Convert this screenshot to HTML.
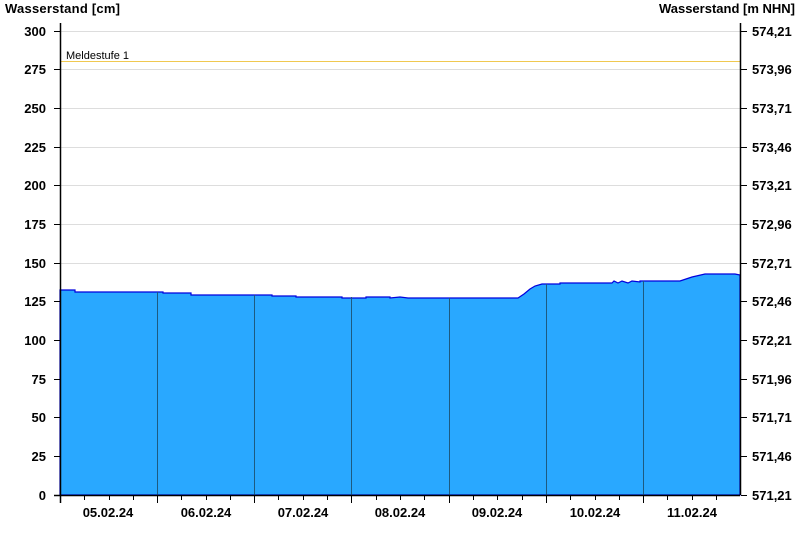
<!DOCTYPE html>
<html><head><meta charset="utf-8"><style>
body{margin:0;background:#fff;}
svg text{font-family:"Liberation Sans",sans-serif;font-size:13px;font-weight:bold;fill:#000;}
</style></head><body>
<svg width="800" height="550" xmlns="http://www.w3.org/2000/svg">
<text x="5" y="13" textLength="115">Wasserstand [cm]</text>
<text x="795" y="13" text-anchor="end">Wasserstand [m NHN]</text>
<g stroke="#ddd" stroke-width="1">
<line x1="60" x2="740" y1="31.5" y2="31.5"/><line x1="60" x2="740" y1="69.5" y2="69.5"/>
<line x1="60" x2="740" y1="108.5" y2="108.5"/><line x1="60" x2="740" y1="147.5" y2="147.5"/>
<line x1="60" x2="740" y1="185.5" y2="185.5"/><line x1="60" x2="740" y1="224.5" y2="224.5"/>
<line x1="60" x2="740" y1="263.5" y2="263.5"/>
</g>
<line x1="60" x2="740" y1="61.5" y2="61.5" stroke="#f0c850" stroke-width="1"/>
<text x="66" y="59" style="font-weight:normal;font-size:11px">Meldestufe 1</text>
<path d="M60,495 L60,290 L75,290 L75,292 L163,292 L163,293 L191,293 L191,295 L272,295 L272,296 L296,296 L296,297 L342,297 L342,298 L366,298 L366,297 L390,297 L390,298 L400,297 L408,298 L518,298 L524,294 L530,289 L535,286 L542,284 L560,284 L560,283 L612,283 L614,281 L618,283 L622,281 L628,283 L632,281 L640,282 L640,281 L680,281 L686,279 L692,277 L705,274 L735,274 L740,275 L740,495 Z" fill="#29a8ff" stroke="#0000dd" stroke-width="1.2"/>
<g stroke="#1d5a80" stroke-width="1">
<line x1="157.5" x2="157.5" y1="292" y2="495"/><line x1="254.5" x2="254.5" y1="295" y2="495"/>
<line x1="351.5" x2="351.5" y1="297" y2="495"/><line x1="449.5" x2="449.5" y1="298" y2="495"/>
<line x1="546.5" x2="546.5" y1="284" y2="495"/><line x1="643.5" x2="643.5" y1="281" y2="495"/>
</g>
<g stroke="#000" stroke-width="1.5">
<line x1="60.5" x2="60.5" y1="23" y2="503"/><line x1="740.5" x2="740.5" y1="23" y2="495"/>
<line x1="54" x2="740" y1="495.5" y2="495.5"/>
</g>
<g stroke="#000" stroke-width="1">
<path d="M54,31.5h6M54,69.5h6M54,108.5h6M54,147.5h6M54,185.5h6M54,224.5h6M54,263.5h6M54,301.5h6M54,340.5h6M54,379.5h6M54,417.5h6M54,456.5h6"/>
<path d="M741,31.5h6M741,69.5h6M741,108.5h6M741,147.5h6M741,185.5h6M741,224.5h6M741,263.5h6M741,301.5h6M741,340.5h6M741,379.5h6M741,417.5h6M741,456.5h6M741,495.5h6"/>
<path d="M157.5,495v8M254.5,495v8M351.5,495v8M449.5,495v8M546.5,495v8M643.5,495v8"/>
<path d="M84.5,495v5M109.5,495v5M133.5,495v5M181.5,495v5M206.5,495v5M230.5,495v5M278.5,495v5M303.5,495v5M327.5,495v5M376.5,495v5M400.5,495v5M424.5,495v5M473.5,495v5M497.5,495v5M522.5,495v5M570.5,495v5M595.5,495v5M619.5,495v5M667.5,495v5M692.5,495v5M716.5,495v5"/>
</g>
<g text-anchor="end">
<text x="46" y="36">300</text><text x="46" y="74">275</text><text x="46" y="113">250</text><text x="46" y="152">225</text><text x="46" y="190">200</text><text x="46" y="229">175</text><text x="46" y="268">150</text><text x="46" y="306">125</text><text x="46" y="345">100</text><text x="46" y="384">75</text><text x="46" y="422">50</text><text x="46" y="461">25</text><text x="46" y="500">0</text>
</g>
<g>
<text x="752" y="36">574,21</text><text x="752" y="74">573,96</text><text x="752" y="113">573,71</text><text x="752" y="152">573,46</text><text x="752" y="190">573,21</text><text x="752" y="229">572,96</text><text x="752" y="268">572,71</text><text x="752" y="306">572,46</text><text x="752" y="345">572,21</text><text x="752" y="384">571,96</text><text x="752" y="422">571,71</text><text x="752" y="461">571,46</text><text x="752" y="500">571,21</text>
</g>
<g text-anchor="middle">
<text x="108" y="517">05.02.24</text><text x="206" y="517">06.02.24</text><text x="303" y="517">07.02.24</text><text x="400" y="517">08.02.24</text><text x="497" y="517">09.02.24</text><text x="595" y="517">10.02.24</text><text x="692" y="517">11.02.24</text>
</g>
</svg>
</body></html>
